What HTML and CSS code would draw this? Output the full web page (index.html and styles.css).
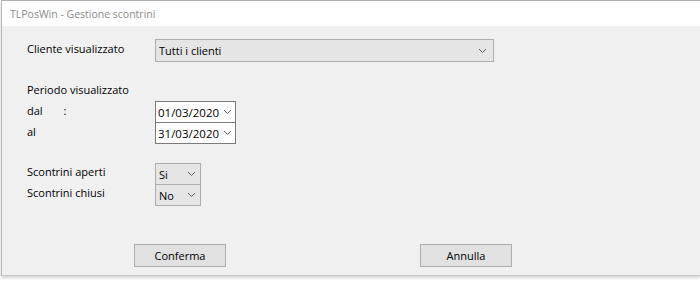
FILE: index.html
```html
<!DOCTYPE html>
<html>
<head>
<meta charset="utf-8">
<link rel="stylesheet" href="styles.css">
</head>
<body>
<div class="window">
  <div class="titlebar"><span class="title">TLPosWin - Gestione scontrini</span></div>
  <div class="content">
    <div class="row row-cliente">
      <div class="label">Cliente visualizzato</div>
      <div class="combo combo-wide"><span>Tutti i clienti</span>
        <svg class="chev" width="9" height="6" viewBox="0 0 9 6"><polyline points="1,1 4.5,4.5 8,1" fill="none" stroke="#606060" stroke-width="1"/></svg>
      </div>
    </div>
    <div class="section-label">Periodo visualizzato</div>
    <div class="row row-date">
      <div class="label">dal <span class="colon">:</span></div>
      <div class="date"><span>01/03/2020</span>
        <svg class="chev" width="9" height="6" viewBox="0 0 9 6"><polyline points="1,1 4.5,4.5 8,1" fill="none" stroke="#606060" stroke-width="1"/></svg>
      </div>
    </div>
    <div class="row row-date">
      <div class="label">al</div>
      <div class="date"><span>31/03/2020</span>
        <svg class="chev" width="9" height="6" viewBox="0 0 9 6"><polyline points="1,1 4.5,4.5 8,1" fill="none" stroke="#606060" stroke-width="1"/></svg>
      </div>
    </div>
    <div class="row row-sel first-sel">
      <div class="label">Scontrini aperti</div>
      <div class="combo combo-small"><span>Si</span>
        <svg class="chev" width="9" height="6" viewBox="0 0 9 6"><polyline points="1,1 4.5,4.5 8,1" fill="none" stroke="#606060" stroke-width="1"/></svg>
      </div>
    </div>
    <div class="row row-sel">
      <div class="label">Scontrini chiusi</div>
      <div class="combo combo-small"><span>No</span>
        <svg class="chev" width="9" height="6" viewBox="0 0 9 6"><polyline points="1,1 4.5,4.5 8,1" fill="none" stroke="#606060" stroke-width="1"/></svg>
      </div>
    </div>
    <div class="buttons">
      <div class="btn btn-ok">Conferma</div>
      <div class="btn btn-cancel">Annulla</div>
    </div>
  </div>
</div>
</body>
</html>
```

FILE: styles.css
```css
html, body {
  margin: 0;
  padding: 0;
  background: #ffffff;
}
body {
  font-family: "Open Sans", "Noto Sans", sans-serif;
  font-size: 11px;
  color: #000;
  width: 700px;
  height: 283px;
  overflow: hidden;
}
.window {
  margin-left: 1px;
  width: 699px;
  height: 276px;
  border-left: 1px solid #b4b4b4;
  box-sizing: border-box;
  box-shadow: 0 2px 3px rgba(0,0,0,0.18);
}
.titlebar {
  height: 26px;
  background: #ffffff;
  border-top: 1px solid #b0b0b0;
  box-sizing: border-box;
  display: flex;
  align-items: center;
  padding-left: 8px;
}
.title {
  font-size: 10.5px;
  color: #8a8a8a;
}
.content {
  height: 250px;
  background: #f0f0f0;
  box-sizing: border-box;
  padding-left: 25px;
  padding-top: 13px;
  border-bottom: 1px solid #c8c8c8;
}
.row {
  display: flex;
  align-items: flex-start;
}
.label {
  width: 128px;
  line-height: 16px;
}
.row-cliente .label {
  padding-top: 2px;
}
.combo {
  box-sizing: border-box;
  height: 23px;
  border: 1px solid #adadad;
  background: #e5e5e5;
  display: flex;
  align-items: center;
  justify-content: space-between;
  padding-left: 3px;
  padding-right: 6px;
}
.combo-wide {
  width: 339px;
}
.section-label {
  margin-top: 20px;
  line-height: 16px;
}
.row-date {
  height: 21px;
}
.section-label + .row-date {
  margin-top: 3px;
}
.row-date .label {
  padding-top: 2px;
}
.colon {
  margin-left: 18px;
}
.date {
  box-sizing: border-box;
  width: 81px;
  height: 22px;
  border: 1px solid #7a7a7a;
  background: #ffffff;
  display: flex;
  align-items: center;
  justify-content: space-between;
  padding-left: 2px;
  padding-right: 3px;
  font-size: 11.5px;
}
.row-sel {
  height: 21px;
}
.first-sel {
  margin-top: 20px;
}
.row-sel .label {
  padding-top: 1px;
}
.combo-small {
  width: 46px;
  height: 22px;
  padding-right: 4px;
}
.buttons {
  display: flex;
  margin-top: 39px;
  padding-left: 107px;
  gap: 194px;
}
.btn {
  box-sizing: border-box;
  width: 92px;
  height: 23px;
  border: 1px solid #adadad;
  background: #e1e1e1;
  display: flex;
  align-items: center;
  justify-content: center;
}
```
